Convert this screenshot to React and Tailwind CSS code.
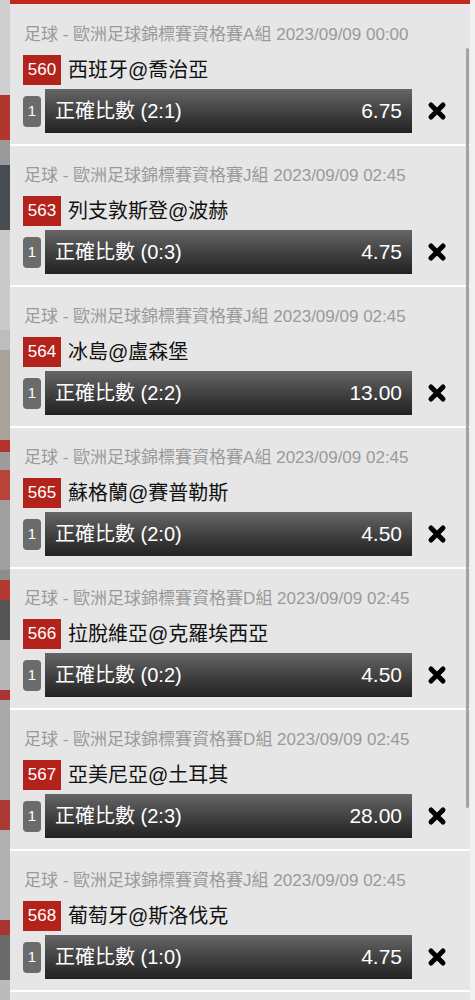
import React from "react";

const bets = [
  { g: "A", t: "00:00", n: "560", m: "西班牙@喬治亞", s: "2:1", o: "6.75" },
  { g: "J", t: "02:45", n: "563", m: "列支敦斯登@波赫", s: "0:3", o: "4.75" },
  { g: "J", t: "02:45", n: "564", m: "冰島@盧森堡", s: "2:2", o: "13.00" },
  { g: "A", t: "02:45", n: "565", m: "蘇格蘭@賽普勒斯", s: "2:0", o: "4.50" },
  { g: "D", t: "02:45", n: "566", m: "拉脫維亞@克羅埃西亞", s: "0:2", o: "4.50" },
  { g: "D", t: "02:45", n: "567", m: "亞美尼亞@土耳其", s: "2:3", o: "28.00" },
  { g: "J", t: "02:45", n: "568", m: "葡萄牙@斯洛伐克", s: "1:0", o: "4.75" },
];

const strip = [
  [95, "#cfcfcf"], [45, "#b0352c"], [25, "#9a9a9a"], [65, "#474b52"], [100, "#c9c9c9"],
  [20, "#bdbdbd"], [90, "#a8a396"], [12, "#b3332b"], [18, "#9c9c9c"], [30, "#b8433a"],
  [70, "#a0a0a0"], [10, "#8d8d8d"], [20, "#b33a30"], [40, "#555555"], [50, "#b5b5b5"],
  [10, "#aa3333"], [100, "#a9a9a9"], [30, "#a83a33"], [90, "#b0b0b0"], [15, "#aa3333"],
  [45, "#6a6a6a"], [20, "#bbbbbb"],
];

function XIcon() {
  return (
    <svg width="20" height="20" viewBox="0 0 20 20">
      <path d="M4 4 L16 16 M16 4 L4 16" stroke="#000" strokeWidth="5" strokeLinecap="round" />
    </svg>
  );
}

function Card({ b }) {
  return (
    <div className="flex flex-col shrink-0 bg-[#e6e6e6] border-b-2 border-white pt-[20px] pl-[13px] h-[141px]">
      <div className="text-[17px] leading-[20px] text-[#9a9a9a] whitespace-nowrap pl-px">
        足球 - 歐洲足球錦標賽資格賽{b.g}組 2023/09/09 {b.t}
      </div>
      <div className="flex items-center mt-[10px] h-[30px]">
        <div className="h-[30px] w-[38px] bg-[#b3231c] text-white text-[17px] flex items-center justify-center">
          {b.n}
        </div>
        <div className="ml-[7px] text-[20px] text-[#111] leading-[30px]">{b.m}</div>
      </div>
      <div className="flex items-center mt-[4px] h-[44px]">
        <div className="w-[18px] h-[31px] rounded-[4px] bg-[#6b6b6b] text-white text-[15px] flex items-center justify-center">
          1
        </div>
        <div className="ml-[4px] w-[367px] h-[44px] bg-gradient-to-b from-[#666666] to-[#222222] flex items-center justify-between pl-[10px] pr-[10px] text-white">
          <span className="text-[20px]">正確比數 ({b.s})</span>
          <span className="text-[21px]">{b.o}</span>
        </div>
        <div className="ml-[15px] flex items-center">
          <XIcon />
        </div>
      </div>
    </div>
  );
}

export default function App() {
  return (
    <div
      className="w-[475px] h-[1000px] overflow-hidden flex bg-[#f0f0f0]"
      style={{ fontFamily: '"Liberation Sans", "Noto Sans CJK TC", sans-serif' }}
    >
      <div className="w-[10px] flex flex-col shrink-0">
        {strip.map(([h, c], i) => (
          <div key={i} className="shrink-0" style={{ height: h, background: c }} />
        ))}
      </div>
      <div className="w-[460px] relative flex flex-col shrink-0 bg-[#e6e6e6]">
        <div className="h-[5px] bg-[#c0271f] border-b border-[#e9e9e9] shrink-0" />
        {bets.map((b, i) => (
          <Card key={i} b={b} />
        ))}
        <div className="absolute right-[1px] top-[48px] w-[3px] h-[760px] bg-[#a3a3a3] rounded-full" />
      </div>
    </div>
  );
}
